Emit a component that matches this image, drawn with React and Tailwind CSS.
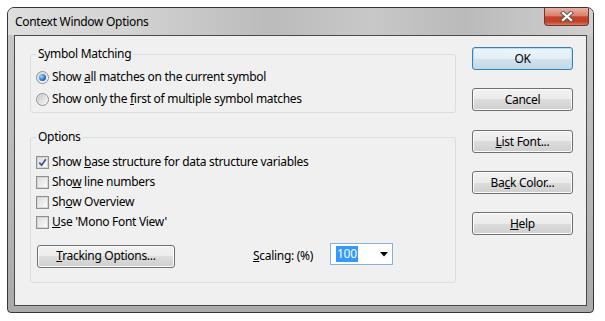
import React from 'react';

const font = "font-['Noto_Sans','Open_Sans',sans-serif] text-[12px] leading-[16px] tracking-[-0.3px] text-black";

const Btn = ({ children, primary }) => (
    <button
        className={
            primary
                ? 'flex h-[23px] w-[101px] items-center justify-center rounded-[3px] border border-[#3c7fb1] bg-[linear-gradient(to_bottom,#ecf5fb_0%,#e2eef6_50%,#d3e3ee_50%,#c5d8e5_100%)] shadow-[inset_0_0_0_1px_#b3def5]'
                : 'flex h-[23px] w-[101px] items-center justify-center rounded-[3px] border border-[#707070] bg-[linear-gradient(to_bottom,#f2f2f2_0%,#ebebeb_50%,#dddddd_50%,#cfcfcf_100%)] shadow-[inset_0_0_0_1px_#fbfbfb]'
        }
    >
        {children}
    </button>
);

const Radio = ({ checked }) => (
    <span className="flex h-[13px] w-[13px] shrink-0 items-center justify-center rounded-full border border-[#8e8f8f] bg-[linear-gradient(135deg,#d8d8d8,#fafafa)]">
        {checked ? (
            <span className="h-[7px] w-[7px] rounded-full bg-[radial-gradient(circle_at_35%_35%,#a6dcff,#2a73cf_55%,#0f3f87)]" />
        ) : (
            <span className="h-[9px] w-[9px] rounded-full bg-[linear-gradient(135deg,#c9c9c9,#f5f5f5)]" />
        )}
    </span>
);

const Check = ({ checked }) => (
    <span className="flex h-[13px] w-[13px] shrink-0 items-center justify-center border border-[#8e8f8f] bg-white">
        <span className="flex h-[11px] w-[11px] items-center justify-center border border-[#d6d6d6] bg-[linear-gradient(135deg,#dedede,#fbfbfb)]">
            {checked && (
                <svg width="9" height="9" viewBox="0 0 9 9">
                    <path d="M1.3 4.6 L3.6 7.2 L7.8 1.2" fill="none" stroke="#3b4f8f" strokeWidth="1.7" />
                </svg>
            )}
        </span>
    </span>
);

const Group = ({ label, children, className }) => (
    <fieldset className={`rounded-[3px] border border-[#d5dfe5] ${className}`}>
        <legend className="ml-[5px] px-[2px] leading-[16px]">{label}</legend>
        {children}
    </fieldset>
);

export default function App() {
    return (
        <div className={`h-[321px] w-[605px] bg-white pl-[7px] pt-[7px] ${font}`}>
            <div className="flex h-[306px] w-[587px] flex-col rounded-t-[7px] rounded-b-[4px] border border-[#363636] bg-[linear-gradient(to_bottom,#c9c9c9,#aaaaaa)]">
                {/* title bar */}
                <div className="flex h-[27px] items-start justify-between rounded-t-[6px] bg-[linear-gradient(to_right,#dedede_0%,#d3d3d3_20%,#bbbbbb_45%,#c8c8c8_62%,#bababa_78%,#d0d0d0_100%)]">
                    <span className="pl-[7px] pt-[6px]">Context Window Options</span>
                    <div className="mr-[4px] flex h-[18px] w-[45px] items-center justify-center rounded-b-[4px] border border-t-0 border-[#6b3a32] bg-[linear-gradient(to_bottom,#eab0a2_0%,#dc806c_45%,#c8432b_52%,#bf4229_80%,#d97a61_100%)]">
                        <svg width="14" height="11" viewBox="0 0 14 11">
                            <path d="M3 2 L11 9 M11 2 L3 9" stroke="#5a5a5a" strokeWidth="4.2" strokeLinecap="square" />
                            <path d="M3 2 L11 9 M11 2 L3 9" stroke="#ffffff" strokeWidth="2.2" strokeLinecap="square" />
                        </svg>
                    </div>
                </div>

                {/* client */}
                <div className="flex-1 px-[6px] pb-[6px]">
                    <div className="flex h-full items-start border border-[#4a4a4a] bg-[#f0f0f0] pl-[15px]">
                        <div className="w-[426px] pt-[10px]">
                            <Group label="Symbol Matching" className="pb-[2px]">
                                <div className="mt-[4px] pl-[5px]">
                                    <div className="flex h-[22px] items-center gap-[3px]">
                                        <Radio checked />
                                        <span>Show <u>a</u>ll matches on the current symbol</span>
                                    </div>
                                    <div className="flex h-[22px] items-center gap-[3px]">
                                        <Radio />
                                        <span>Show only the <u>f</u>irst of multiple symbol matches</span>
                                    </div>
                                </div>
                            </Group>

                            <Group label="Options" className="mt-[16px] pb-[13px]">
                                <div className="mt-[7px] pl-[5px]">
                                    <div className="flex h-[20px] items-center gap-[3px]">
                                        <Check checked />
                                        <span>Show <u>b</u>ase structure for data structure variables</span>
                                    </div>
                                    <div className="flex h-[20px] items-center gap-[3px]">
                                        <Check />
                                        <span>Sho<u>w</u> line numbers</span>
                                    </div>
                                    <div className="flex h-[20px] items-center gap-[3px]">
                                        <Check />
                                        <span>Sh<u>o</u>w Overview</span>
                                    </div>
                                    <div className="flex h-[20px] items-center gap-[3px]">
                                        <Check />
                                        <span><u>U</u>se 'Mono Font View'</span>
                                    </div>
                                </div>
                                <div className="mt-[11px] flex items-center pl-[6px]">
                                    <div className="[&>button]:w-[138px]">
                                        <Btn><span><u>T</u>racking Options...</span></Btn>
                                    </div>
                                    <span className="ml-[78px] w-[77px]"><u>S</u>caling: (%)</span>
                                    <div className="mb-[4px] flex h-[22px] w-[63px] items-center justify-between border border-[#86b0e0] bg-white pl-[5px] pr-[4px]">
                                        <span className="bg-[#3399ff] px-[1px] text-white">100</span>
                                        <svg width="8" height="5" viewBox="0 0 8 5">
                                            <path d="M0 0 L8 0 L4 4.5 Z" fill="#000" />
                                        </svg>
                                    </div>
                                </div>
                            </Group>
                        </div>

                        <div className="ml-[16px] flex flex-col pt-[11px]">
                            <Btn primary>OK</Btn>
                            <div className="mt-[18px]"><Btn>Cancel</Btn></div>
                            <div className="mt-[19px]"><Btn><span><u>L</u>ist Font...</span></Btn></div>
                            <div className="mt-[18px]"><Btn><span>Ba<u>c</u>k Color...</span></Btn></div>
                            <div className="mt-[18px]"><Btn><span><u>H</u>elp</span></Btn></div>
                        </div>
                    </div>
                </div>
            </div>
        </div>
    );
}
